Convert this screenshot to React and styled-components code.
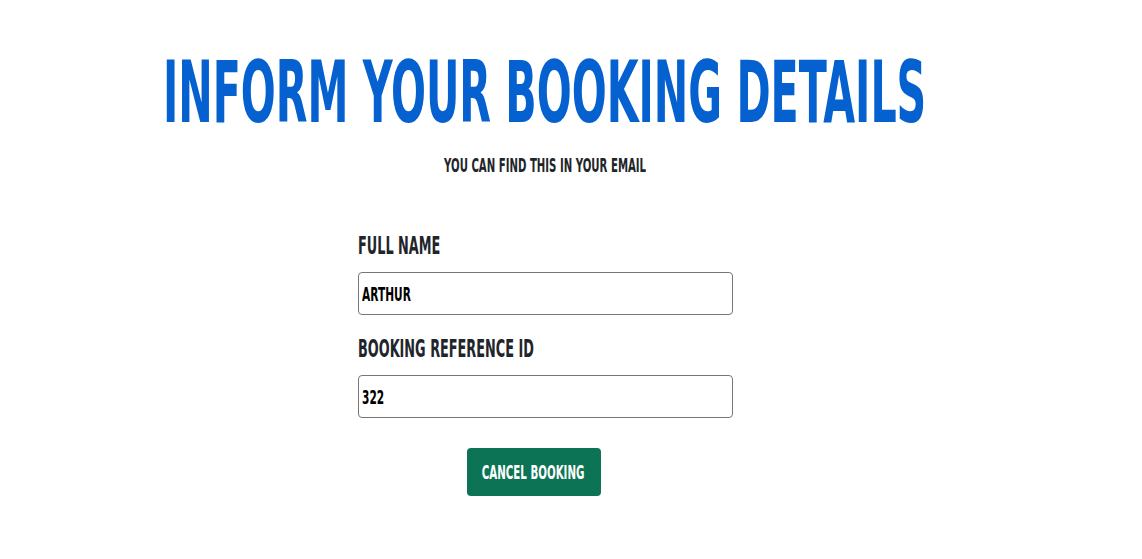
import React from 'react';
import styled, { createGlobalStyle } from 'styled-components';

const GlobalStyle = createGlobalStyle`
  body {
    margin: 0;
    background: #fff;
    font-family: "DejaVu Sans Condensed", "DejaVu Sans", sans-serif;
  }
`;

// reshape the condensed face so it reads like a tall display font
const Squeeze = styled.span`
  display: inline-block;
  white-space: nowrap;
  transform: scale(${p => p.$x}, ${p => p.$y || 1});
  transform-origin: ${p => p.$origin || 'center'} center;
`;

const Page = styled.div`
  width: 1090px;
  padding-top: 49px;
  display: flex;
  flex-direction: column;
  align-items: center;
`;

const Title = styled.h1`
  margin: 0;
  font-size: 60px;
  line-height: 86px;
  font-weight: 700;
  color: #0561cf;
  white-space: nowrap;
`;

const Subtitle = styled.p`
  margin: 21px 0 0;
  font-size: 19px;
  line-height: 19px;
  font-weight: 700;
  color: #212529;
`;

const Form = styled.form`
  width: 375px;
  margin-top: 59px;
  display: flex;
  flex-direction: column;
`;

const Label = styled.label`
  display: block;
  margin-top: ${p => (p.$first ? '0' : '22px')};
  font-size: 24px;
  line-height: 24px;
  font-weight: 700;
  color: #212529;
`;

const Field = styled.div`
  box-sizing: border-box;
  margin-top: 14px;
  width: 375px;
  height: 43px;
  border: 1px solid #767676;
  border-radius: 4px;
  background: #fff;
  overflow: hidden;
`;

const Input = styled.input`
  box-sizing: border-box;
  width: 600px;
  height: 41px;
  padding: 0 0 0 5px;
  border: none;
  outline: none;
  background: transparent;
  font-family: inherit;
  font-size: 19px;
  font-weight: 700;
  color: #000;
  transform: scaleX(0.62);
  transform-origin: left center;
`;

const Button = styled.button`
  align-self: flex-start;
  margin: 30px 0 0 109px;
  width: 134px;
  height: 48px;
  padding: 0;
  display: flex;
  align-items: center;
  justify-content: center;
  border: none;
  border-radius: 4px;
  background: #0c7455;
  color: #fff;
  font-family: inherit;
  font-size: 14px;
  line-height: 20px;
  font-weight: 700;
  cursor: pointer;
`;

export default function App() {
  return (
    <>
      <GlobalStyle />
      <Page>
        <Title><Squeeze $x={0.7625} $y={1.433}>INFORM YOUR BOOKING DETAILS</Squeeze></Title>
        <Subtitle><Squeeze $x={0.594}>YOU CAN FIND THIS IN YOUR EMAIL</Squeeze></Subtitle>
        <Form onSubmit={e => e.preventDefault()}>
          <Label $first htmlFor="name"><Squeeze $x={0.595} $origin="left">FULL NAME</Squeeze></Label>
          <Field><Input id="name" defaultValue="ARTHUR" /></Field>
          <Label htmlFor="ref"><Squeeze $x={0.595} $origin="left">BOOKING REFERENCE ID</Squeeze></Label>
          <Field><Input id="ref" defaultValue="322" /></Field>
          <Button type="submit"><Squeeze $x={0.814} $y={1.43}>CANCEL BOOKING</Squeeze></Button>
        </Form>
      </Page>
    </>
  );
}
